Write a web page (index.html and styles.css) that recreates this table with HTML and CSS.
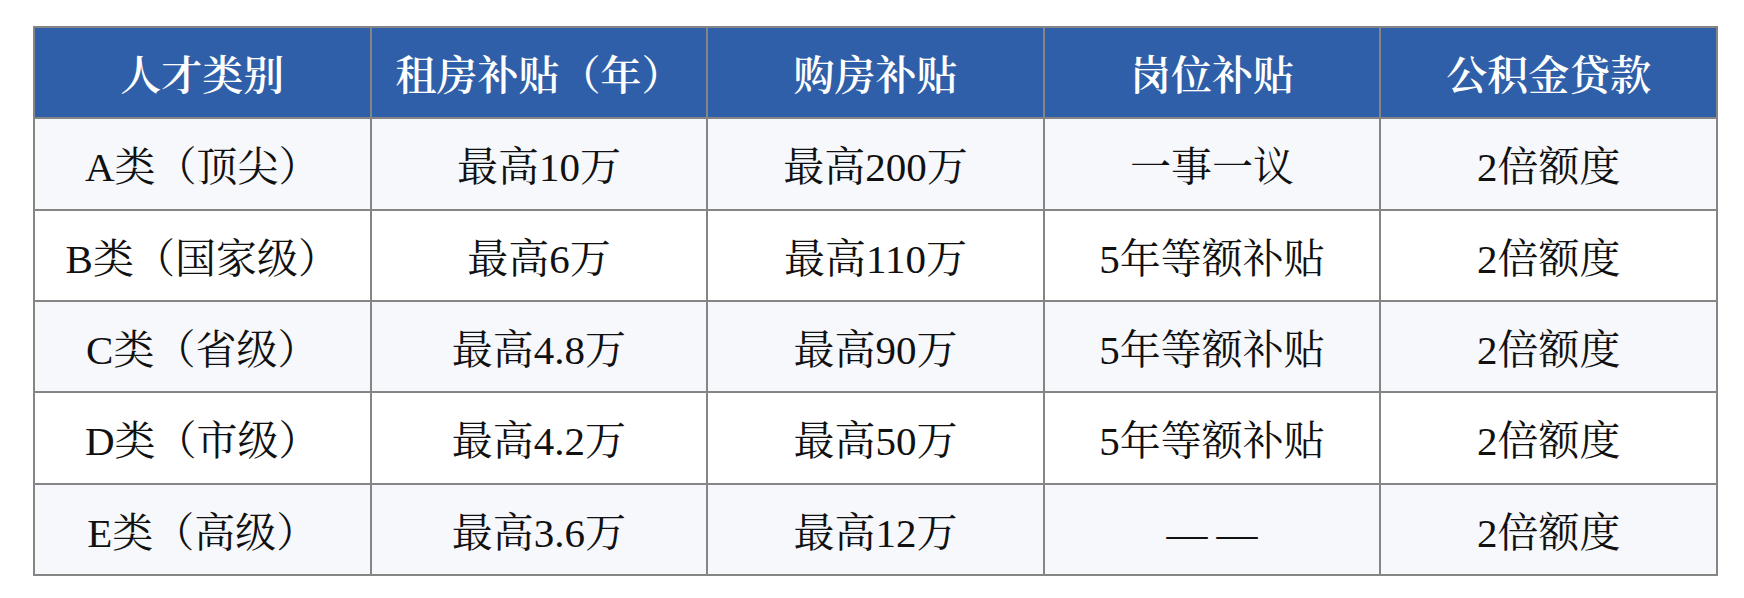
FILE: index.html
```html
<!DOCTYPE html>
<html lang="zh-CN">
<head>
<meta charset="utf-8">
<title>人才补贴</title>
<link rel="stylesheet" href="styles.css">
</head>
<body>
<table class="policy">
  <colgroup>
    <col class="c"><col class="c"><col class="c"><col class="c"><col class="c">
  </colgroup>
  <thead>
    <tr>
      <th>人才类别</th>
      <th>租房补贴（年）</th>
      <th>购房补贴</th>
      <th>岗位补贴</th>
      <th>公积金贷款</th>
    </tr>
  </thead>
  <tbody>
    <tr class="alt">
      <td>A类（顶尖）</td>
      <td>最高10万</td>
      <td>最高200万</td>
      <td>一事一议</td>
      <td>2倍额度</td>
    </tr>
    <tr>
      <td>B类（国家级）</td>
      <td>最高6万</td>
      <td>最高110万</td>
      <td>5年等额补贴</td>
      <td>2倍额度</td>
    </tr>
    <tr class="alt">
      <td>C类（省级）</td>
      <td>最高4.8万</td>
      <td>最高90万</td>
      <td>5年等额补贴</td>
      <td>2倍额度</td>
    </tr>
    <tr>
      <td>D类（市级）</td>
      <td>最高4.2万</td>
      <td>最高50万</td>
      <td>5年等额补贴</td>
      <td>2倍额度</td>
    </tr>
    <tr class="alt">
      <td>E类（高级）</td>
      <td>最高3.6万</td>
      <td>最高12万</td>
      <td><span class="dash">——</span></td>
      <td>2倍额度</td>
    </tr>
  </tbody>
</table>
</body>
</html>
```
FILE: styles.css
```css
html, body {
  margin: 0;
  padding: 0;
  background: #ffffff;
}

body {
  padding: 26px 0 0 33px;
  font-family: "Liberation Serif", "Noto Serif CJK SC", "Noto Sans CJK SC", serif;
  color: #111111;
}

.policy {
  width: 1685px;
  table-layout: fixed;
  border-collapse: separate;
  border-spacing: 2px;
  background: #858585;
}

.policy .c {
  width: 20%;
}

.policy th,
.policy td {
  box-sizing: border-box;
  height: 89.33px;
  padding: 8px 0 0 0;
  text-align: center;
  vertical-align: middle;
  font-size: 41px;
  line-height: 1;
}

.policy th {
  background: #2f5fa8;
  color: #ffffff;
  font-weight: 600;
}

.policy td {
  background: #ffffff;
  font-weight: 400;
}

.policy tr.alt td {
  background: #f7f8fc;
}

.dash {
  display: inline-block;
  letter-spacing: 0.22em;
  margin-right: -0.22em;
}
```
